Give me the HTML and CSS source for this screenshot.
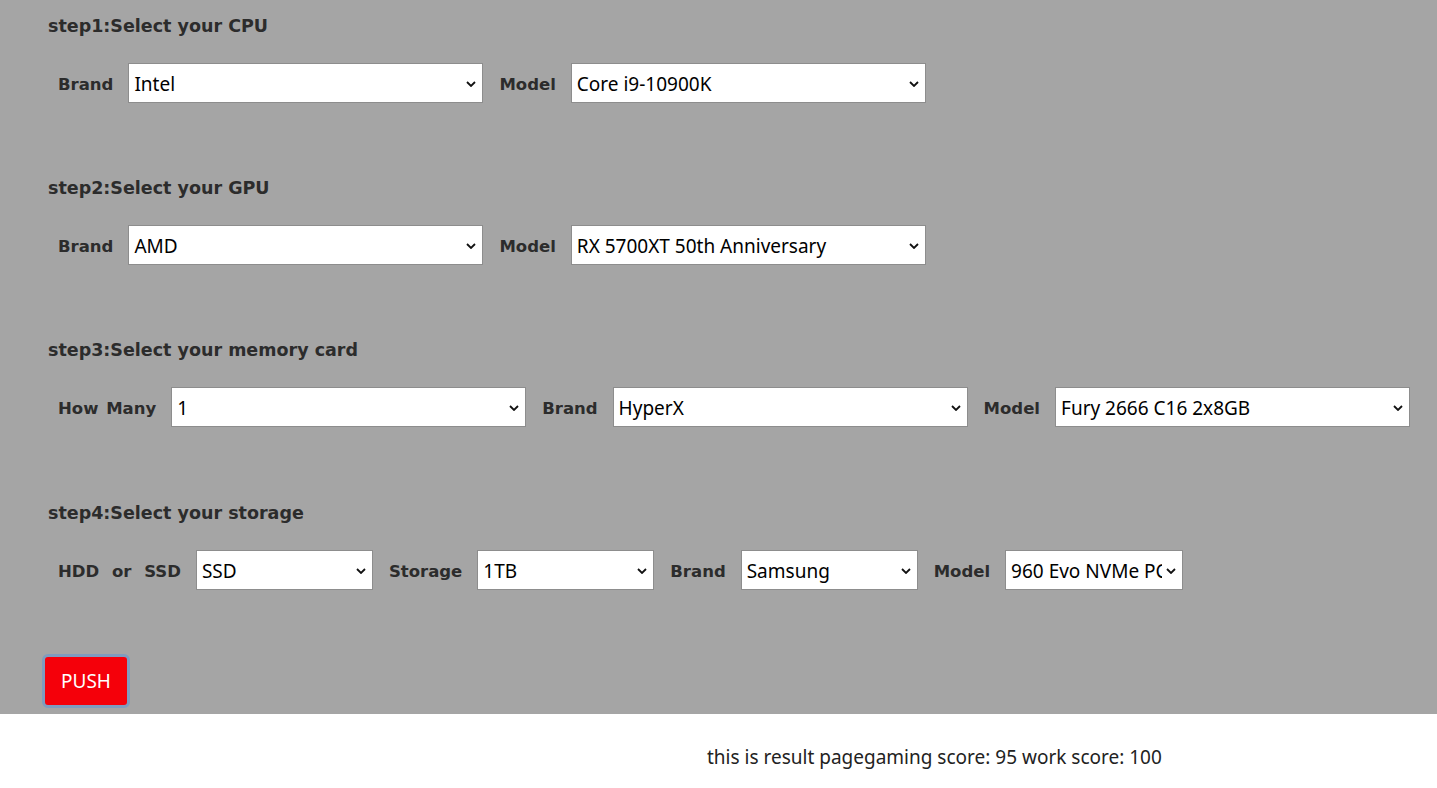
FILE: index.html
```html
<!doctype html>
<html>
<head>
<meta charset="utf-8">
<title>PC builder</title>
<link rel="stylesheet" href="styles.css">
</head>

<body>
	<div class="panel">
		<div class="step">
			<h3 class="title">step1:Select your CPU</h3>
			<div class="row">
				<label class="lab">Brand</label>
				<span class="sel w355"><select><option>Intel</option><option>AMD</option></select><svg viewBox="0 0 10 6"><path d="M1 1l4 4 4-4"/></svg></span>
				<label class="lab">Model</label>
				<span class="sel w355"><select><option>Core i9-10900K</option></select><svg viewBox="0 0 10 6"><path d="M1 1l4 4 4-4"/></svg></span>
			</div>
		</div>

		<div class="step">
			<h3 class="title">step2:Select your GPU</h3>
			<div class="row">
				<label class="lab">Brand</label>
				<span class="sel w355"><select><option>AMD</option><option>Nvidia</option></select><svg viewBox="0 0 10 6"><path d="M1 1l4 4 4-4"/></svg></span>
				<label class="lab">Model</label>
				<span class="sel w355"><select><option>RX 5700XT 50th Anniversary</option></select><svg viewBox="0 0 10 6"><path d="M1 1l4 4 4-4"/></svg></span>
			</div>
		</div>

		<div class="step step3">
			<h3 class="title">step3:Select your memory card</h3>
			<div class="row">
				<label class="lab">How Many</label>
				<span class="sel w355"><select><option>1</option><option>2</option></select><svg viewBox="0 0 10 6"><path d="M1 1l4 4 4-4"/></svg></span>
				<label class="lab">Brand</label>
				<span class="sel w355"><select><option>HyperX</option></select><svg viewBox="0 0 10 6"><path d="M1 1l4 4 4-4"/></svg></span>
				<label class="lab">Model</label>
				<span class="sel w355"><select><option>Fury 2666 C16 2x8GB</option></select><svg viewBox="0 0 10 6"><path d="M1 1l4 4 4-4"/></svg></span>
			</div>
		</div>

		<div class="step">
			<h3 class="title">step4:Select your storage</h3>
			<div class="row">
				<label class="lab lab-wide">HDD or SSD</label>
				<span class="sel w177"><select><option>SSD</option><option>HDD</option></select><svg viewBox="0 0 10 6"><path d="M1 1l4 4 4-4"/></svg></span>
				<label class="lab">Storage</label>
				<span class="sel w177"><select><option>1TB</option></select><svg viewBox="0 0 10 6"><path d="M1 1l4 4 4-4"/></svg></span>
				<label class="lab">Brand</label>
				<span class="sel w177"><select><option>Samsung</option></select><svg viewBox="0 0 10 6"><path d="M1 1l4 4 4-4"/></svg></span>
				<label class="lab">Model</label>
				<span class="sel w178"><select><option>960 Evo NVMe PCIe</option></select><svg viewBox="0 0 10 6"><path d="M1 1l4 4 4-4"/></svg></span>
			</div>
		</div>

		<button class="push">PUSH</button>
	</div>

	<div class="result">
		<span class="res-title">this is result page</span><span class="res-score">gaming score: 95 work score: 100</span>
	</div>
</body>
</html>
```

FILE: styles.css
```css
	*{
		padding: 0;
		margin: 0;
		box-sizing: border-box;
	}
	body{
		background-color: #fff;
		color: #222;
	}
	.panel{
		background-color: #a5a5a5;
		padding: 14px 48px 6px 42px;
	}
	.step{
		padding-left: 6px;
		margin-bottom: 73px;
	}
	.step3{
		margin-bottom: 74px;
	}
	.step .title{
		font-family: "DejaVu Sans", sans-serif;
		font-weight: bold;
		font-size: 17.5px;
		line-height: 24px;
		color: #2c2c2c;
		margin-bottom: 25px;
	}
	.step .row{
		display: flex;
		align-items: center;
		padding-left: 10px;
	}
	.step .lab{
		font-family: "DejaVu Sans", sans-serif;
		font-weight: bold;
		font-size: 16.5px;
		word-spacing: 2px;
		color: #2c2c2c;
		padding-top: 3px;
		margin-right: 15px;
		white-space: nowrap;
	}
	.step .lab-wide{
		word-spacing: 7px;
	}
	.sel{
		position: relative;
		display: block;
		height: 40px;
		margin-right: 16px;
		flex: none;
	}
	.w355{
		width: 355px;
	}
	.w177{
		width: 177px;
	}
	.w178{
		width: 178px;
	}
	.sel select{
		appearance: none;
		-webkit-appearance: none;
		width: 100%;
		height: 100%;
		border: 1px solid #8d8d8d;
		border-radius: 0;
		background-color: #fff;
		font-family: "Noto Sans", sans-serif;
		font-size: 19px;
		color: #000;
		padding: 2px 20px 0 5px;
		outline: none;
	}
	.sel svg{
		position: absolute;
		right: 7px;
		top: 18px;
		width: 10px;
		height: 6px;
		pointer-events: none;
	}
	.sel svg path{
		fill: none;
		stroke: #111;
		stroke-width: 1.8;
	}
	.push{
		display: block;
		width: 88px;
		height: 54px;
		margin-top: -9px;
		border: 3px solid #7f9cbf;
		border-radius: 6px;
		background-color: #f5000a;
		color: #fff;
		font-family: "Noto Sans", sans-serif;
		font-size: 19px;
		cursor: pointer;
	}
	.result{
		padding: 30px 0 0 707px;
		height: 74px;
		font-size: 19px;
		color: #222;
	}
	.res-title{
		font-family: "Noto Sans", sans-serif;
	}
	.res-score{
		font-family: "Noto Sans", sans-serif;
	}
```
